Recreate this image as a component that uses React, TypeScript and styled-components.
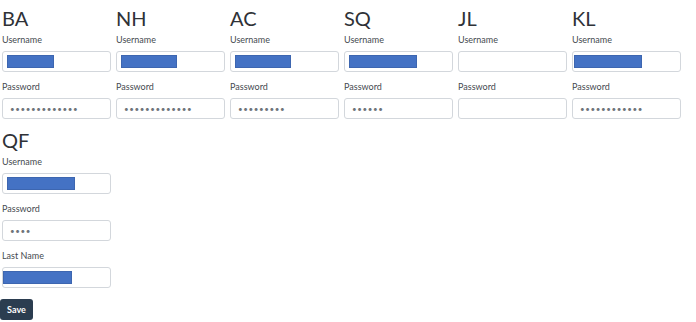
import styled, { createGlobalStyle } from "styled-components";

const GlobalStyle = createGlobalStyle`
	body {
		margin: 0;
		background: #ffffff;
		font-family: Lato, "Open Sans", sans-serif;
		color: #333333;
	}
`;

const Page = styled.div`
	padding: 6px 0 0 2px;
`;

const Grid = styled.div`
	display: grid;
	grid-template-columns: repeat(6, 109px);
	column-gap: 5px;
	align-items: start;
`;

const Column = styled.div`
	display: flex;
	flex-direction: column;
`;

const Heading = styled.div`
	font-size: 20px;
	line-height: 24px;
	margin-bottom: 4px;
	color: #2f3237;
`;

const Field = styled.div`
	display: flex;
	flex-direction: column;
	margin-bottom: 9px;
`;

const Label = styled.div`
	font-size: 9px;
	line-height: 12px;
	margin-bottom: 5px;
	color: #454a50;
`;

const InputBox = styled.div<{ $inset: number }>`
	box-sizing: border-box;
	height: 21px;
	border: 1px solid #d3d7dc;
	border-radius: 3px;
	background: #ffffff;
	display: flex;
	align-items: center;
	padding-left: ${(p) => p.$inset}px;
`;

const Redacted = styled.span`
	display: block;
	height: 13px;
	background: #4472c4;
	border: 1px solid #3d66b0;
	box-sizing: border-box;
`;

const Dots = styled.span`
	font-size: 8px;
	letter-spacing: 0.6px;
	color: #6e747a;
	line-height: 1;
`;

const SaveButton = styled.button`
	width: 33px;
	height: 21px;
	margin-left: -2px;
	margin-top: 1px;
	border: none;
	border-radius: 3px;
	background: #2b3d50;
	color: #ffffff;
	font-family: Lato, "Open Sans", sans-serif;
	font-size: 9px;
	font-weight: 700;
	padding: 0;
	cursor: pointer;
`;

type Entry = {
	code: string;
	user: number;
	userInset?: number;
	pass: number;
};

const entries: Entry[] = [
	{ code: "BA", user: 47, pass: 13 },
	{ code: "NH", user: 56, pass: 13 },
	{ code: "AC", user: 56, pass: 9 },
	{ code: "SQ", user: 68, pass: 6 },
	{ code: "JL", user: 0, pass: 0 },
	{ code: "KL", user: 68, userInset: 1, pass: 12 },
];

const UserInput = ({ width, inset = 4 }: { width: number; inset?: number }) => (
	<InputBox $inset={inset}>
		{width > 0 && <Redacted style={{ width }} />}
	</InputBox>
);

const PassInput = ({ count }: { count: number }) => (
	<InputBox $inset={7}>
		{count > 0 && <Dots>{"•".repeat(count)}</Dots>}
	</InputBox>
);

const App = () => {
	return (
		<Page>
			<GlobalStyle />
			<Grid>
				{entries.map((e) => (
					<Column key={e.code}>
						<Heading>{e.code}</Heading>
						<Field>
							<Label>Username</Label>
							<UserInput width={e.user} inset={e.userInset} />
						</Field>
						<Field>
							<Label>Password</Label>
							<PassInput count={e.pass} />
						</Field>
					</Column>
				))}
				<Column>
					<Heading>QF</Heading>
					<Field>
						<Label>Username</Label>
						<UserInput width={68} />
					</Field>
					<Field>
						<Label>Password</Label>
						<PassInput count={4} />
					</Field>
					<Field>
						<Label>Last Name</Label>
						<UserInput width={69} inset={0} />
					</Field>
					<div>
						<SaveButton>Save</SaveButton>
					</div>
				</Column>
			</Grid>
		</Page>
	);
};

export default App;
